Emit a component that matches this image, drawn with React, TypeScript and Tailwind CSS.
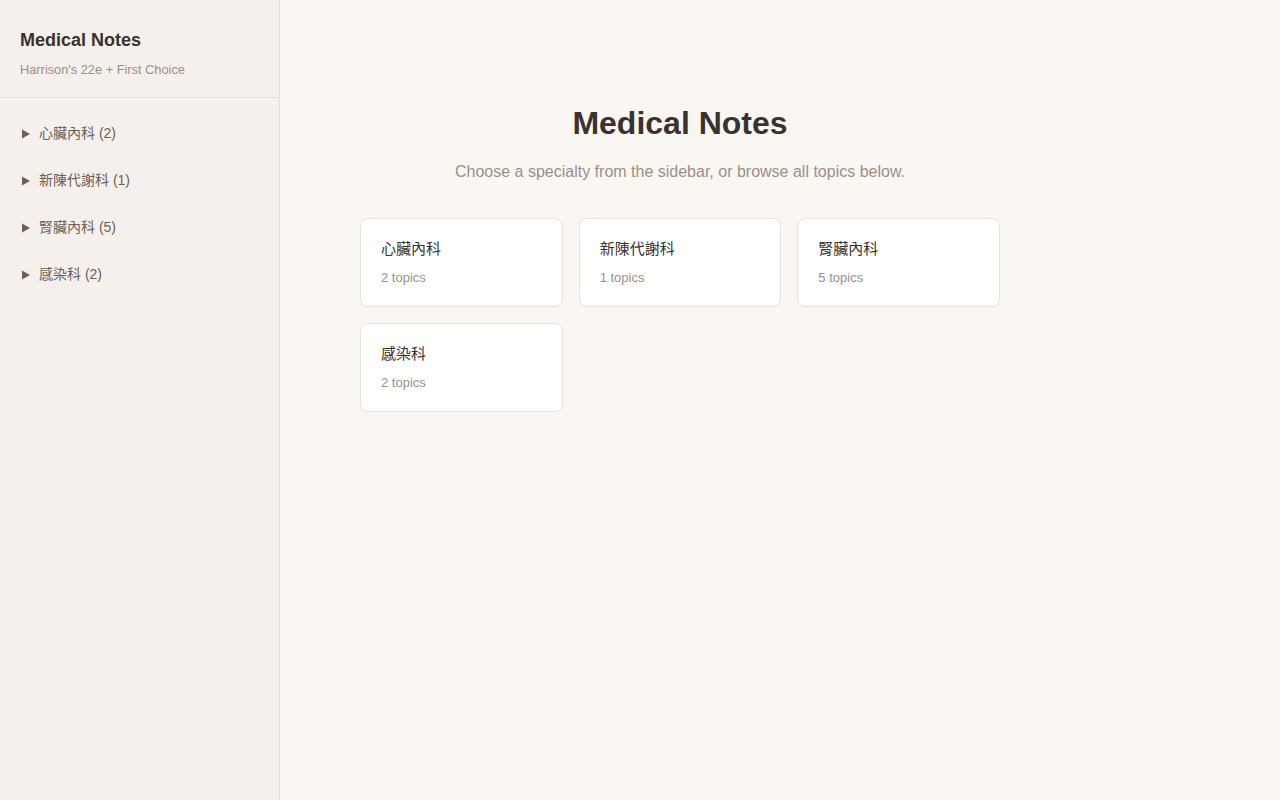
import React from 'react';

interface Specialty {
    name: string;
    count: number;
}

const specialties: Specialty[] = [
    { name: '心臟內科', count: 2 },
    { name: '新陳代謝科', count: 1 },
    { name: '腎臟內科', count: 5 },
    { name: '感染科', count: 2 },
];

const font = { fontFamily: '"Liberation Sans", Arial, "Noto Sans CJK TC", sans-serif' };

const Caret = () => (
    <svg width="8" height="10" viewBox="0 0 8 10" className="shrink-0">
        <path d="M0 0.5 L8 5 L0 9.5 Z" fill="#6b5f57" />
    </svg>
);

const Sidebar: React.FC = () => (
    <aside className="w-[280px] shrink-0 min-h-screen bg-[#f5f0eb] border-r border-[#e6dfd8]">
        <div className="px-5 pt-[27px] pb-[17px] border-b border-[#e6dfd8]">
            <h1 className="text-[18px] leading-[27px] font-bold text-[#3a322c]">Medical Notes</h1>
            <p className="mt-[6px] text-[12.8px] leading-5 text-[#9a8f86]">Harrison's 22e + First Choice</p>
        </div>
        <nav className="pt-3">
            {specialties.map((s) => (
                <div key={s.name} className="h-[47px] flex items-center gap-[9px] pl-[22px] text-[14px] text-[#6b5f57]">
                    <Caret />
                    <span>
                        {s.name} ({s.count})
                    </span>
                </div>
            ))}
        </nav>
    </aside>
);

const App: React.FC = () => {
    return (
        <div className="flex min-h-screen bg-[#faf7f3]" style={font}>
            <Sidebar />
            <main className="flex-1 px-20">
                <div className="w-[640px] pt-[104px]">
                    <h2 className="text-center text-[32px] leading-[38px] font-bold text-[#3a322c]">Medical Notes</h2>
                    <p className="mt-[18px] text-center text-[16px] leading-6 text-[#9a8f86]">
                        Choose a specialty from the sidebar, or browse all topics below.
                    </p>
                    <div className="mt-[34px] grid grid-cols-3 gap-4">
                        {specialties.map((s) => (
                            <div key={s.name} className="bg-white border border-[#e8e2dc] rounded-lg px-5 pt-5 pb-[19px]">
                                <div className="text-[15px] leading-5 text-[#3a322c]">{s.name}</div>
                                <div className="mt-[10px] text-[13px] leading-[18px] text-[#9a8f86]">{s.count} topics</div>
                            </div>
                        ))}
                    </div>
                </div>
            </main>
        </div>
    );
};

export default App;
